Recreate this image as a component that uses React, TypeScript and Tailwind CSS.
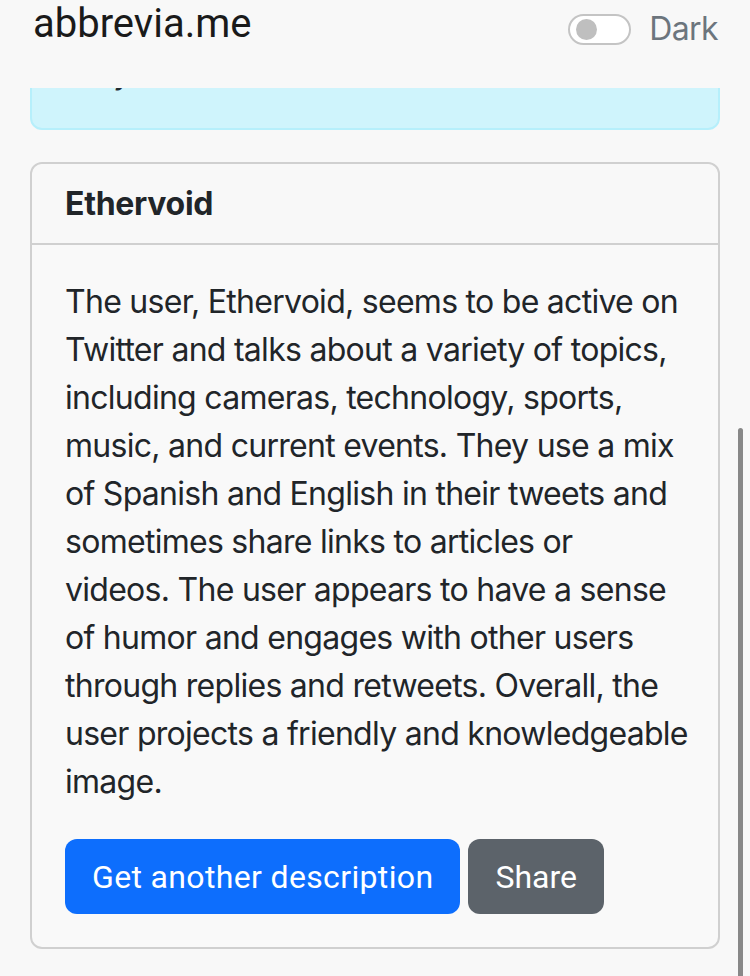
import React from 'react';

const ThemeToggle: React.FC = () => (
  <label className="flex items-center gap-[18px]">
    <span className="w-[63px] h-[31px] rounded-full border-2 border-[#c4c4c4] bg-white flex items-center pl-[6px]">
      <span className="w-[21px] h-[21px] rounded-full bg-[#bfbfbf]" />
    </span>
    <span className="text-[32px] leading-none tracking-[-0.6px] text-[#6c757d] font-['Inter',sans-serif]">Dark</span>
  </label>
);

export default function App() {
  return (
    <div className="relative min-h-[976px] bg-[#f8f8f8] text-[#212529] font-['Inter',sans-serif] overflow-hidden">
      <header className="relative z-10 h-[88px] flex items-start justify-between pl-[33px] pr-[32px] pt-[2px]">
        <h1 className="text-[40px] leading-[44px] font-['Roboto',sans-serif] font-normal text-[#1a1a1a]">abbrevia.me</h1>
        <div className="pt-[11px]">
          <ThemeToggle />
        </div>
      </header>

      {/* tail of the info alert, scrolled mostly out of view */}
      <div className="mx-[30px] h-[42px] overflow-hidden">
        <div className="-mt-[60px] h-[102px] rounded-[12px] border-2 border-[#b6effb] bg-[#cff4fc] px-[33px] pt-[19px] text-[32px] leading-[48px] text-[#1f2a30]">
          <p>( my</p>
        </div>
      </div>

      <section className="mx-[30px] mt-[32px] rounded-[12px] border-2 border-[#d0d0d0] bg-[#f9f9f9]">
        <div className="h-[81px] flex items-center px-[33px] border-b-2 border-[#d0d0d0] bg-[#f8f8f8] rounded-t-[12px]">
          <h5 className="text-[32px] font-bold leading-none tracking-[-0.3px]">Ethervoid</h5>
        </div>
        <div className="pl-[33px] pr-[24px] pt-[33px] pb-[33px]">
          <p className="text-[32px] leading-[48px] tracking-[-0.72px] mb-[33px]">
            The user, Ethervoid, seems to be active on Twitter and talks about a variety of topics, including cameras,
            technology, sports, music, and current events. They use a mix of Spanish and English in their tweets and
            sometimes share links to articles or
            <br />
            videos. The user appears to have a sense of humor and engages with other users through replies and
            retweets. Overall, the user projects a friendly and knowledgeable image.
          </p>
          <div className="flex gap-[8px]">
            <button className="h-[75px] px-[27px] rounded-[12px] bg-[#0d6efd] text-white text-[32px] tracking-[0.35px] font-['Roboto',sans-serif]">
              Get another description
            </button>
            <button className="h-[75px] px-[27px] rounded-[12px] bg-[#5c636a] text-white text-[32px] font-['Roboto',sans-serif]">
              Share
            </button>
          </div>
        </div>
      </section>

      {/* scroll indicator */}
      <div className="absolute left-[738px] top-[428px] w-[5px] h-[560px] rounded-full bg-[#888888]" />
    </div>
  );
}
